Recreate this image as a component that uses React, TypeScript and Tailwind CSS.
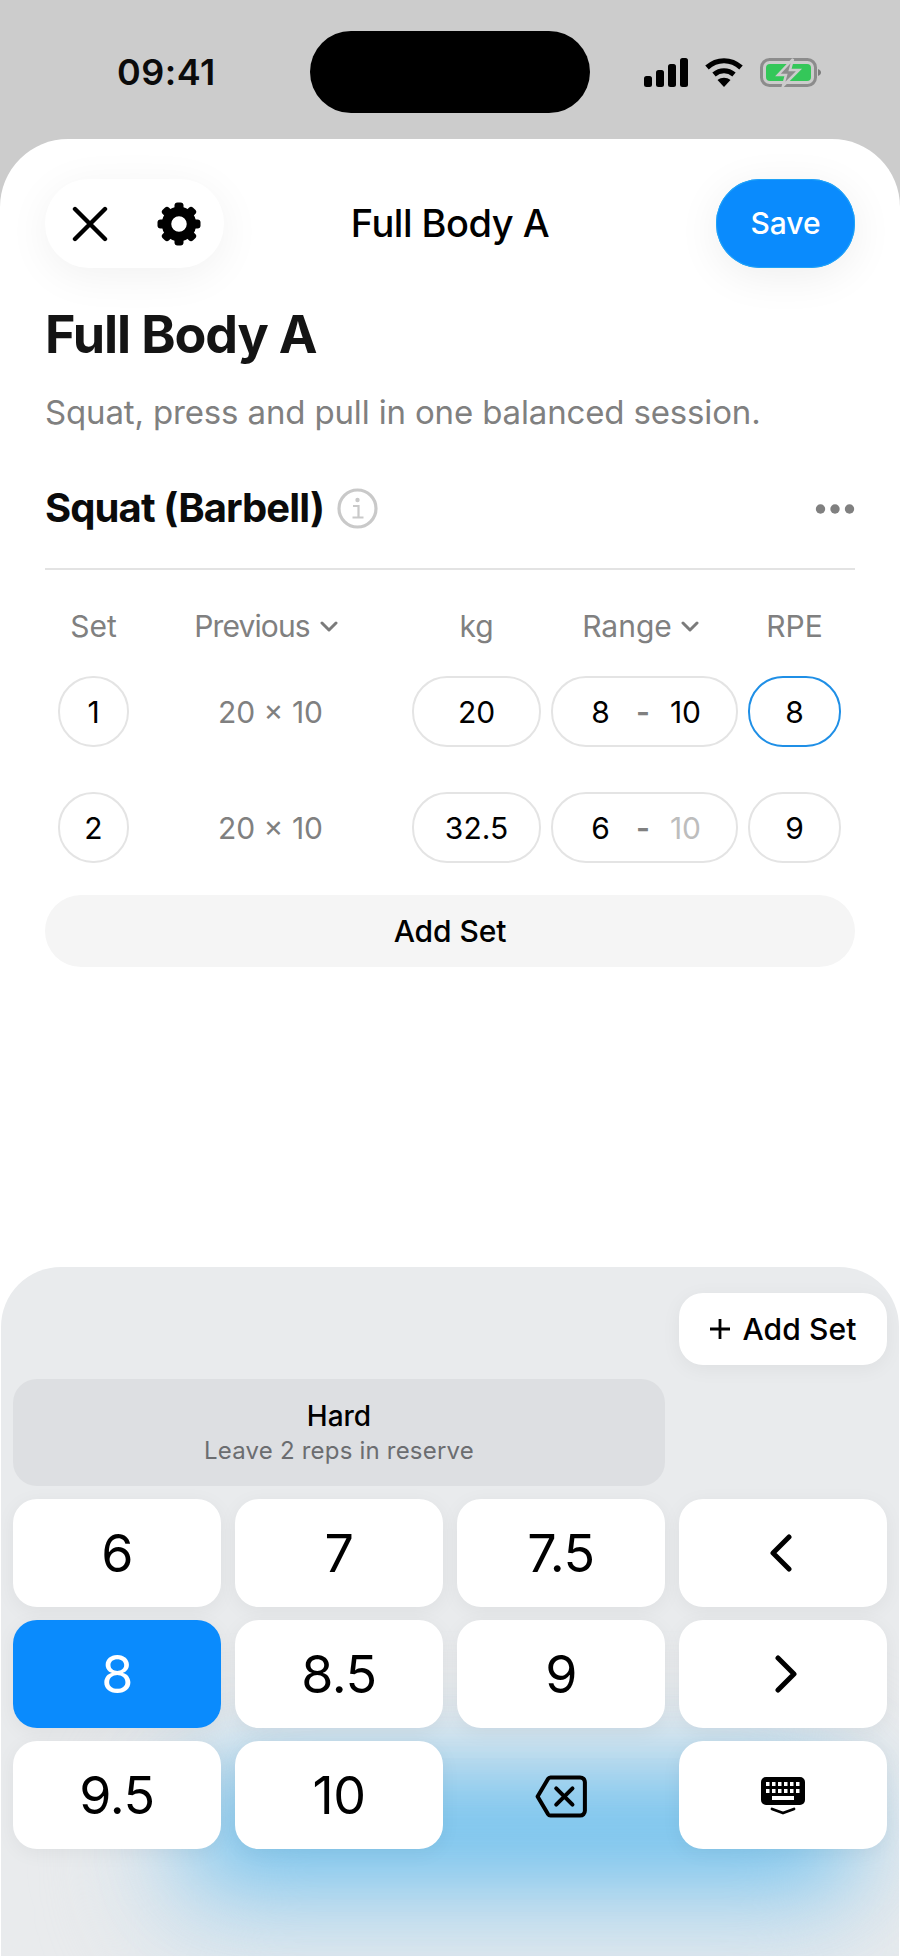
import React from "react";

const font = { fontFamily: "Inter, 'Liberation Sans', sans-serif" };

function StatusIcons() {
  return (
    <div className="flex items-center gap-[17px]">
      <svg width="44" height="29" viewBox="0 0 44 29" fill="#000">
        <rect x="0" y="18" width="8" height="11" rx="2.5" />
        <rect x="12" y="12" width="8" height="17" rx="2.5" />
        <rect x="24" y="6" width="8" height="23" rx="2.5" />
        <rect x="36" y="0" width="8" height="29" rx="2.5" />
      </svg>
      <svg width="38" height="29" viewBox="0 0 38 29" fill="none" stroke="#000" strokeWidth="5.2">
        <path d="M2 9.5C12 .5 26 .5 36 9.5" />
        <path d="M9 16.5C15 11.5 23 11.5 29 16.5" />
        <path d="M19 29l-6.5-7c4-3 9-3 13 0z" fill="#000" stroke="none" />
      </svg>
      <svg width="61" height="29" viewBox="0 0 61 29" fill="none">
        <rect x="1.5" y="1.5" width="54" height="26" rx="8" stroke="#8c8c8c" strokeWidth="3" />
        <rect x="6" y="6" width="45" height="17" rx="4" fill="#34c759" />
        <path d="M58 11c2 .8 3 2 3 3.500s-1 2.700-3 3.500z" fill="#7c7c7c" />
        <path d="M33 1L18 17h8l-3 11 16-16h-9l3-11z" fill="#8c8c8c" stroke="#cccccc" strokeWidth="2.500" />
      </svg>
    </div>
  );
}

function Gear() {
  const teeth = [0, 45, 90, 135, 180, 225, 270, 315];
  return (
    <svg width="44" height="44" viewBox="0 0 44 44">
      <g fill="#000">
        {teeth.map((a) => (
          <rect key={a} x="17.500" y="0.500" width="9" height="12" rx="3" transform={`rotate(${a} 22 22)`} />
        ))}
      </g>
      <circle cx="22" cy="22" r="12.500" fill="none" stroke="#000" strokeWidth="9.500" />
    </svg>
  );
}

function Chevron() {
  return (
    <svg width="18" height="11" viewBox="0 0 18 11" fill="none" stroke="#7b7b7b" strokeWidth="3" strokeLinecap="round" strokeLinejoin="round">
      <path d="M2 2l7 7 7-7" />
    </svg>
  );
}

function Cell({ w, active, children }: { w: string; active?: boolean; children: React.ReactNode }) {
  return (
    <div className={`${w} h-[71px] shrink-0 flex items-center justify-center pt-[2px] rounded-[35px] border-2 bg-white text-[30px] text-black ${active ? "border-[#1f8fe6]" : "border-[#e4e4e4]"}`}>
      {children}
    </div>
  );
}

function Row({ n, kg, lo, hi, hiMuted, rpe, active }: { n: string; kg: string; lo: string; hi: string; hiMuted?: boolean; rpe: string; active?: boolean }) {
  return (
    <div className="flex items-center pl-[13px]">
      <Cell w="w-[71px]">{n}</Cell>
      <div className="w-[283px] shrink-0 pt-[2px] text-center text-[30px] text-[#808080]">20 × 10</div>
      <Cell w="w-[129px]">{kg}</Cell>
      <div className="w-[10px] shrink-0" />
      <Cell w="w-[187px]">
        <span className="w-[40px] text-center">{lo}</span>
        <span className="w-[45px] text-center font-semibold text-[#808080]">-</span>
        <span className={`w-[40px] mr-[3px] text-center ${hiMuted ? "text-[#bdbdbd]" : ""}`}>{hi}</span>
      </Cell>
      <div className="w-[10px] shrink-0" />
      <Cell w="w-[93px]" active={active}>{rpe}</Cell>
    </div>
  );
}

function Key({ children, blue, plain }: { children: React.ReactNode; blue?: boolean; plain?: boolean }) {
  const tone = plain
    ? ""
    : blue
      ? "bg-[#0a8bfd] text-white shadow-[0_4px_20px_rgba(0,0,0,0.05)]"
      : "bg-white text-black shadow-[0_4px_20px_rgba(0,0,0,0.05)]";
  return (
    <div className={`h-[108px] rounded-[24px] flex items-center justify-center pt-[2px] text-[52px] font-normal tracking-[-0.5px] ${tone}`}>
      {children}
    </div>
  );
}

export default function App() {
  return (
    <div className="w-[900px] h-[1956px] flex flex-col bg-[#cccccc] overflow-hidden" style={font}>
      <div className="h-[139px] shrink-0 flex items-start pl-[117px] pr-[79px] pt-[31px]">
        <div className="w-[193px] h-[82px] flex items-center text-[36px] font-semibold text-[#0b0b0b] tracking-[0.5px]">09:41</div>
        <div className="w-[280px] h-[82px] rounded-full bg-black" />
        <div className="ml-auto h-[82px] flex items-center">
          <StatusIcons />
        </div>
      </div>

      <div className="flex-1 flex flex-col rounded-t-[68px] bg-white overflow-hidden">
        <div className="h-[162px] shrink-0 flex items-start justify-between px-[45px] pt-[40px]">
          <div className="w-[179px] h-[89px] rounded-[44px] bg-white flex items-center pl-[27px] gap-[49px] shadow-[0_8px_44px_rgba(0,0,0,0.06)]">
            <svg width="36" height="36" viewBox="0 0 36 36" fill="none" stroke="#000" strokeWidth="4.400" strokeLinecap="round" className="shrink-0">
              <path d="M3 3l30 30M33 3L3 33" />
            </svg>
            <Gear />
          </div>
          <div className="h-[89px] flex items-center text-[38px] font-medium text-black tracking-[-0.5px]">Full Body A</div>
          <div className="w-[179px] flex justify-end">
            <div className="w-[139px] h-[89px] rounded-[44px] bg-[#0a8bfd] flex items-center justify-center text-[30px] font-medium text-white shadow-[0_8px_44px_rgba(0,0,0,0.07),inset_0_0_0_1px_#1fa3f7]">Save</div>
          </div>
        </div>

        <div className="px-[45px]">
          <h1 className="h-[67px] flex items-center text-[52px] font-bold text-[#141414] tracking-[-1.1px]">Full Body A</h1>
          <p className="mt-[21px] h-[48px] flex items-center text-[33px] text-[#808080] tracking-[-0.15px]">Squat, press and pull in one balanced session.</p>
          <div className="mt-[47px] h-[48px] flex items-center justify-between">
            <div className="flex items-center gap-[13px]">
              <span className="text-[40px] font-bold text-[#0b0b0b] tracking-[-0.9px]">Squat (Barbell)</span>
              <svg width="41" height="41" viewBox="0 0 41 41" fill="none" stroke="#c9c9c9">
                <circle cx="20.500" cy="20.500" r="18.500" strokeWidth="3.200" />
                <path d="M16 18h5.500v11M15.500 29.500h11" strokeWidth="2.200" />
                <circle cx="20.500" cy="12" r="2.200" fill="#c9c9c9" stroke="none" />
              </svg>
            </div>
            <svg width="40" height="12" viewBox="0 0 40 12" fill="#808080" className="mt-[2px]">
              <circle cx="5.500" cy="6" r="4.700" />
              <circle cx="20" cy="6" r="4.700" />
              <circle cx="34.500" cy="6" r="4.700" />
            </svg>
          </div>
          <div className="mt-[36px] h-[2px] bg-[#e3e3e3]" />

          <div className="mt-[37px] h-[38px] flex items-center pl-[13px] text-[30px] text-[#808080]">
            <div className="w-[71px] shrink-0 text-center">Set</div>
            <div className="w-[283px] shrink-0 flex items-center justify-center gap-[10px] pr-[9px]">
              <span className="tracking-[-0.9px]">Previous</span> <Chevron />
            </div>
            <div className="w-[129px] shrink-0 text-center">kg</div>
            <div className="w-[10px] shrink-0" />
            <div className="w-[187px] shrink-0 flex items-center justify-center gap-[9px] pr-[8px]">
              Range <Chevron />
            </div>
            <div className="w-[10px] shrink-0" />
            <div className="w-[93px] shrink-0 text-center">RPE</div>
          </div>

          <div className="mt-[31px] flex flex-col gap-[45px]">
            <Row n="1" kg="20" lo="8" hi="10" rpe="8" active />
            <Row n="2" kg="32.5" lo="6" hi="10" hiMuted rpe="9" />
          </div>

          <div className="mt-[32px] h-[72px] rounded-[36px] bg-[#f5f5f5] flex items-center justify-center pt-[1px] text-[30px] font-medium text-black tracking-[-0.1px]">Add Set</div>
        </div>

        <div className="relative mt-auto mx-px h-[689px] shrink-0 rounded-t-[60px] bg-[#e9ebed] overflow-hidden">
          <div className="absolute left-[130px] top-[470px] w-[760px] h-[230px] rounded-[100px] bg-[#d3e3ee] blur-[44px]" />
          <div className="absolute left-[190px] top-[512px] w-[660px] h-[100px] rounded-[50px] bg-[#6cc0ee] blur-[44px]" />
          <div className="relative pt-[26px]">
            <div className="flex justify-end pr-[12px]">
              <div className="w-[208px] h-[72px] rounded-[24px] bg-white flex items-center justify-center gap-[11px] text-[30px] font-medium text-black tracking-[0.1px] shadow-[0_4px_20px_rgba(0,0,0,0.05)]">
                <svg width="22" height="22" viewBox="0 0 22 22" fill="none" stroke="#000" strokeWidth="2.800">
                  <path d="M11 1v20M1 11h20" />
                </svg>
                Add Set
              </div>
            </div>
            <div className="mt-[14px] grid grid-cols-4 gap-x-[14px] gap-y-[13px] px-[12px]">
              <div className="col-span-3 h-[107px] rounded-[24px] bg-[#dddfe2] flex flex-col items-center justify-center">
                <div className="text-[28px] leading-[36px] font-medium text-black">Hard</div>
                <div className="text-[24px] leading-[34px] text-[#6b6d70] tracking-[0.2px]">Leave 2 reps in reserve</div>
              </div>
              <div />
              <Key>6</Key>
              <Key>7</Key>
              <Key>7.5</Key>
              <Key>
                <svg width="26" height="38" viewBox="0 0 26 38" fill="none" stroke="#000" strokeWidth="5" strokeLinecap="round" strokeLinejoin="round" className="mr-[5px] -mt-[2px]">
                  <path d="M21 3L5 19l16 16" />
                </svg>
              </Key>
              <Key blue>8</Key>
              <Key>8.5</Key>
              <Key>9</Key>
              <Key>
                <svg width="26" height="38" viewBox="0 0 26 38" fill="none" stroke="#000" strokeWidth="5" strokeLinecap="round" strokeLinejoin="round" className="ml-[5px] -mt-[2px]">
                  <path d="M5 3l16 16L5 35" />
                </svg>
              </Key>
              <Key>9.5</Key>
              <Key>10</Key>
              <Key plain>
                <svg width="52" height="43" viewBox="0 0 54 45" fill="none" stroke="#000" strokeWidth="4.200" strokeLinecap="round" strokeLinejoin="round">
                  <path d="M16 2.500h31a5 5 0 0 1 5 5v30a5 5 0 0 1-5 5H16a3 3 0 0 1-2.500-1.400L2.500 22.500 13.500 4a3 3 0 0 1 2.500-1.500z" />
                  <path d="M22 14l17 17M39 14L22 31" />
                </svg>
              </Key>
              <Key>
                <svg width="44" height="38" viewBox="0 0 44 38">
                  <rect x="0" y="0" width="44" height="28" rx="5" fill="#000" />
                  <g fill="#fff">
                    {[7, 13, 19, 25, 31, 37].map((x) => (
                      <rect key={`a${x}`} x={x - 2} y="5" width="3.500" height="4" />
                    ))}
                    {[7, 13, 19, 25, 31, 37].map((x) => (
                      <rect key={`b${x}`} x={x - 2} y="12" width="3.500" height="4" />
                    ))}
                    <rect x="11" y="19" width="22" height="4" />
                  </g>
                  <path d="M11 32l11 4 11-4" fill="none" stroke="#000" strokeWidth="2.800" strokeLinecap="round" strokeLinejoin="round" />
                </svg>
              </Key>
            </div>
          </div>
        </div>
      </div>
    </div>
  );
}
